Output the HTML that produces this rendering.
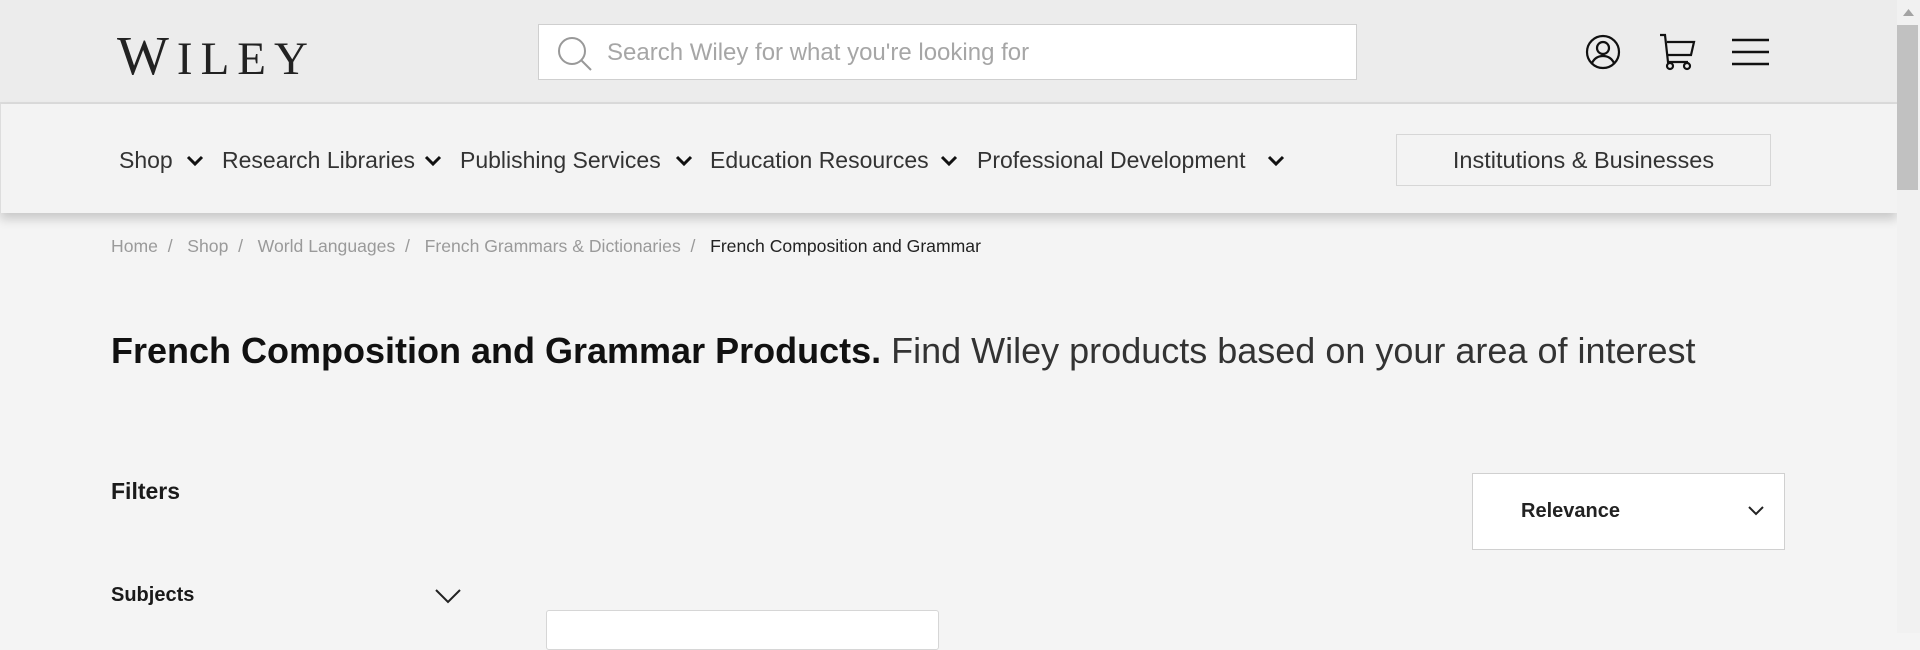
<!DOCTYPE html>
<html><head><meta charset="utf-8"><style>
*{margin:0;padding:0;box-sizing:border-box}
body{width:1920px;height:633px;overflow:hidden;background:#f4f4f4;font-family:"Liberation Sans",sans-serif;position:relative;color:#1a1a1a}
.top{position:absolute;left:0;top:0;width:1897px;height:104px;background:#ececec;border-bottom:2px solid #dcdcdc}
.logo{position:absolute;left:117px;top:24px;font-family:"Liberation Serif",serif;font-size:55px;letter-spacing:8px;color:#222;white-space:nowrap}
.logo span{font-size:47px}
.search{position:absolute;left:538px;top:24px;width:819px;height:56px;background:#fff;border:1px solid #cfcfcf}
.search .ph{position:absolute;left:68px;top:14px;font-size:24px;color:#a6a6a6}
.nav{position:absolute;left:0;top:104px;width:1897px;height:109px;background:#f3f3f3;box-shadow:0 6px 10px rgba(0,0,0,.18);border-left:1px solid #ddd}
.nav .it{position:absolute;top:43px;font-size:23px;color:#333}
.inst{position:absolute;left:1395px;top:30px;width:375px;height:52px;border:1px solid #d6d6d6;font-size:23.5px;color:#333;text-align:center;line-height:50px}
.sb{position:absolute;left:1897px;top:0;width:23px;height:633px;background:#f1f1f1}
.sb .th{position:absolute;left:0;top:25px;width:21px;height:165px;background:#c1c1c1}
.bc{position:absolute;left:111px;top:236px;font-size:17.6px;color:#9a9a9a;white-space:nowrap}
.bc b{font-weight:normal;color:#222}
.h1{position:absolute;left:111px;top:330px;font-size:36px;color:#333;white-space:nowrap}
.h1 strong{color:#111}
.filters{position:absolute;left:111px;top:478px;font-size:23px;font-weight:bold}
.subj{position:absolute;left:111px;top:584px;font-size:20px;font-weight:bold}
.rel{position:absolute;left:1472px;top:473px;width:313px;height:77px;background:#fff;border:1px solid #d0d0d0}
.rel span{position:absolute;left:48px;top:26px;font-size:20px;font-weight:bold;color:#222}
.card{position:absolute;left:546px;top:610px;width:393px;height:40px;background:#fff;border:1px solid #d6d6d6;border-radius:3px}
</style></head><body>
<div class="top">
 <div class="logo">W<span>ILEY</span></div>
 <div class="search">
  <svg style="position:absolute;left:18px;top:11px" width="36" height="36" viewBox="0 0 36 36"><circle cx="15" cy="15" r="13" fill="none" stroke="#999" stroke-width="2"/><line x1="24.5" y1="24.5" x2="34" y2="34" stroke="#999" stroke-width="2"/></svg>
  <div class="ph">Search Wiley for what you're looking for</div>
 </div>
 <svg style="position:absolute;left:1585px;top:34px" width="36" height="36" viewBox="0 0 36 36" fill="none" stroke="#111" stroke-width="2.2"><circle cx="18" cy="18" r="16"/><circle cx="18" cy="14" r="6"/><path d="M7 29c3-6 8-7 11-7s8 1 11 7"/></svg>
 <svg style="position:absolute;left:1658px;top:33px" width="38" height="38" viewBox="0 0 38 38" fill="none" stroke="#111" stroke-width="2.2"><path d="M2 2h5l3 27h20"/><path d="M9 9h27l-3 13H10"/><circle cx="12" cy="33" r="3"/><circle cx="29" cy="33" r="3"/></svg>
 <svg style="position:absolute;left:1732px;top:38px" width="37" height="28" viewBox="0 0 37 28" stroke="#111" stroke-width="2.4"><line x1="0" y1="2" x2="37" y2="2"/><line x1="0" y1="14" x2="37" y2="14"/><line x1="0" y1="26" x2="37" y2="26"/></svg>
</div>
<div class="nav">
 <div class="it" style="left:118px">Shop</div>
 <div class="it" style="left:221px">Research Libraries</div>
 <div class="it" style="left:459px">Publishing Services</div>
 <div class="it" style="left:709px">Education Resources</div>
 <div class="it" style="left:976px">Professional Development</div>
 <svg style="position:absolute;left:0;top:0" width="1300" height="109"><g fill="none" stroke="#111" stroke-width="3"><path d="M187 53l7 7 7-7"/><path d="M425 53l7 7 7-7"/><path d="M676 53l7 7 7-7"/><path d="M941 53l7 7 7-7"/><path d="M1268 53l7 7 7-7"/></g></svg>
 <div class="inst">Institutions &amp; Businesses</div>
</div>
<div class="sb"><svg style="position:absolute;left:6px;top:9px" width="11" height="7"><path d="M0 7L5.5 0 11 7z" fill="#a3a3a3"/></svg><div class="th"></div></div>
<div class="bc">Home&nbsp; /&nbsp;&nbsp; Shop&nbsp; /&nbsp;&nbsp; World Languages&nbsp; /&nbsp;&nbsp; French Grammars &amp; Dictionaries&nbsp; /&nbsp;&nbsp; <b>French Composition and Grammar</b></div>
<div class="h1"><strong>French Composition and Grammar Products.</strong> Find Wiley products based on your area of interest</div>
<div class="filters">Filters</div>
<div class="rel"><span>Relevance</span><svg style="position:absolute;left:275px;top:32px" width="16" height="10"><path d="M1 1l7 7 7-7" fill="none" stroke="#222" stroke-width="2"/></svg></div>
<div class="subj">Subjects</div>
<svg style="position:absolute;left:435px;top:589px" width="26" height="15"><path d="M1 1l12 12 12-12" fill="none" stroke="#222" stroke-width="2"/></svg>
<div class="card"></div>
</body></html>
